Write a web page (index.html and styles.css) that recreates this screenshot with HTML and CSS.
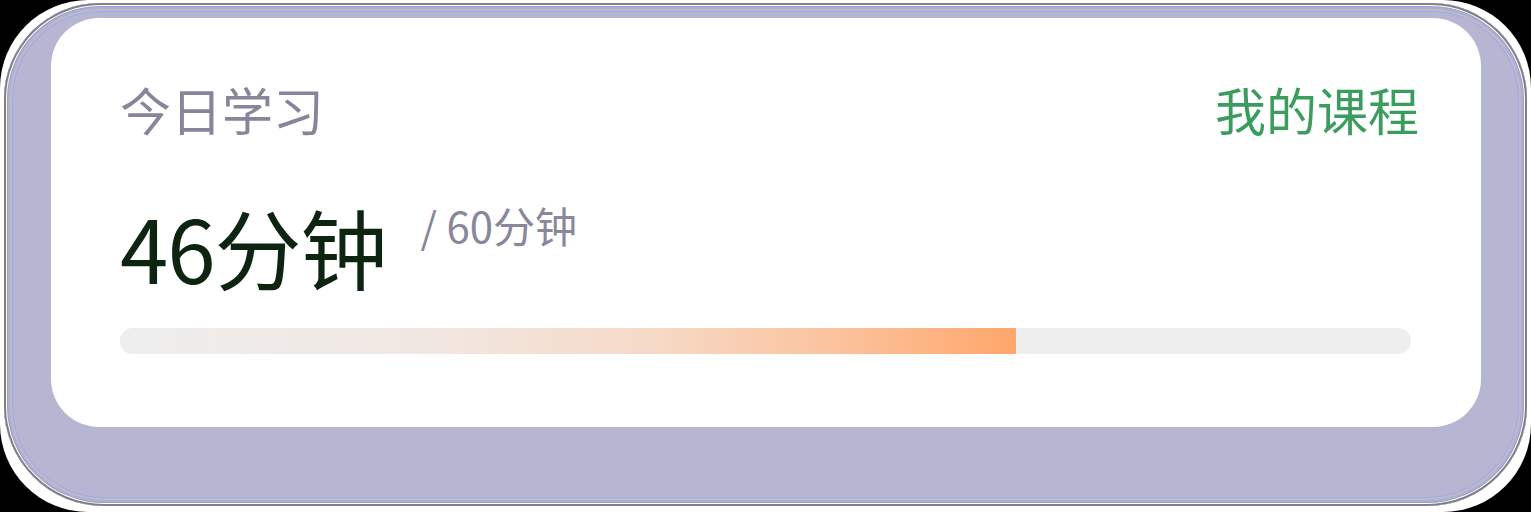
FILE: index.html
```html
<!DOCTYPE html>
<html lang="zh-CN">
<head>
<meta charset="utf-8">
<title>今日学习</title>
<link rel="stylesheet" href="styles.css">
</head>
<body>
<div class="page">
  <div class="glow">
    <div class="card">
      <div class="head">
        <span class="title">今日学习</span>
        <span class="link">我的课程</span>
      </div>
      <div class="stats">
        <span class="done">46分钟</span>
        <span class="goal">/ 60分钟</span>
      </div>
      <div class="bar"><div class="fill" style="width:69.4%"></div></div>
    </div>
  </div>
</div>
</body>
</html>
```

FILE: styles.css
```css
html {
  margin: 0;
  background: #000;
}
body {
  margin: 0;
  width: 1531px;
  height: 512px;
  overflow: hidden;
  font-family: "Noto Sans CJK SC", "Noto Sans", sans-serif;
}
.page {
  width: 1531px;
  height: 512px;
  background: #fff;
  border-radius: 88px;
  padding: 3px 4px 6px 4px;
  box-sizing: border-box;
}
.glow {
  height: 503px;
  box-sizing: border-box;
  padding: 15px 46px 79px 47px;
  background: #b6b6d2;
  border-radius: 96px 96px 100px 100px;
  box-shadow:
    inset 0 0 0 2px #808080,
    inset 0 0 0 3px #ffffff,
    inset 0 0 0 4px #9a9af2,
    inset 0 0 0 6px #b2b2b8,
    inset 0 0 0 8px #babad6,
    inset 0 0 0 9px #a6a6e6;
}
.card {
  height: 409px;
  box-sizing: border-box;
  background: #fff;
  border-radius: 48px;
  padding: 61px 70px 0 69px;
  display: flex;
  flex-direction: column;
}
.head {
  display: flex;
  justify-content: space-between;
  align-items: center;
  font-size: 51px;
  line-height: 60px;
}
.title {
  color: #88859a;
}
.link {
  color: #3b9d5d;
  margin-right: -8px;
}
.stats {
  display: flex;
  align-items: flex-start;
  margin-top: 57px;
}
.done {
  font-size: 87px;
  line-height: 100px;
  color: #0c2410;
  letter-spacing: -1px;
}
.goal {
  font-size: 42px;
  line-height: 50px;
  color: #8a879b;
  margin-left: 34px;
  margin-top: 4px;
}
.bar {
  margin-top: 32px;
  height: 26px;
  border-radius: 13px;
  background: #eeeeee;
  overflow: hidden;
}
.fill {
  height: 100%;
  background: linear-gradient(90deg, #eeeeee 0%, #f1e7e1 35%, #f6d9c6 60%, #fbc29c 80%, #ffa66b 100%);
}
```
